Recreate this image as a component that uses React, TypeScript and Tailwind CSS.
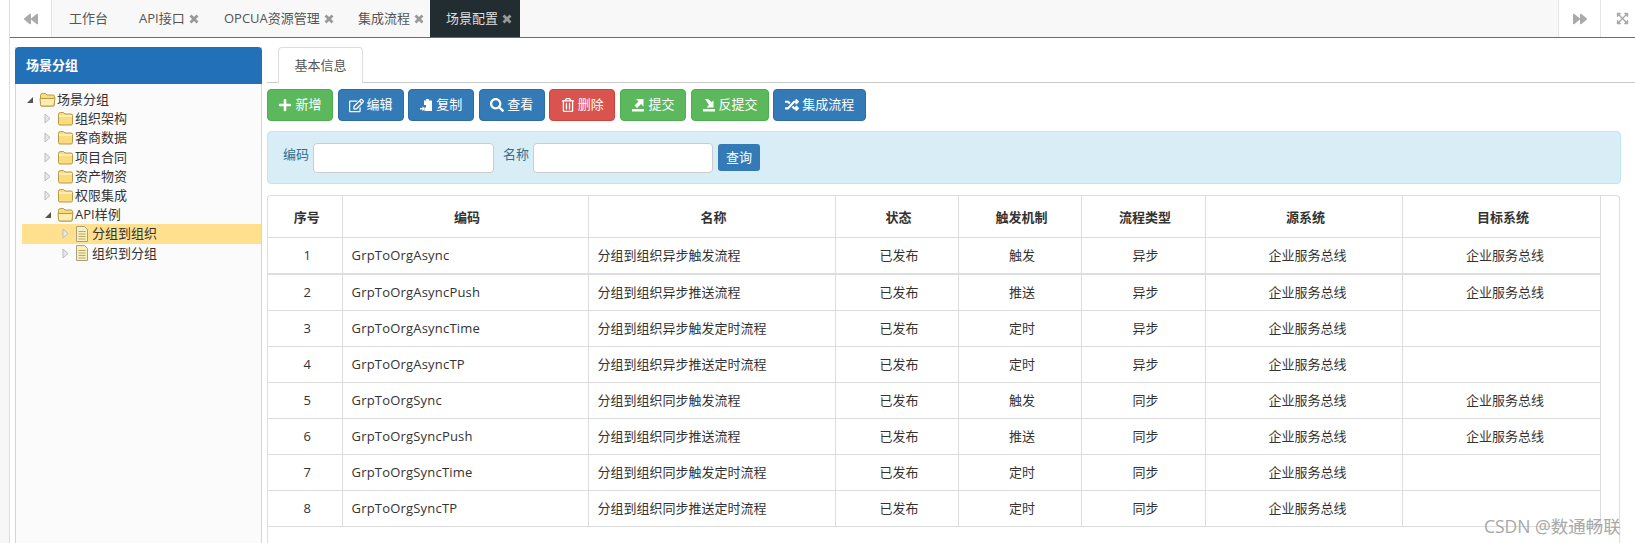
import React from "react";
import { FaBackward, FaExpandArrowsAlt, FaForward, FaPlus, FaRandom, FaRegEdit, FaRegTrashAlt, FaSearch } from "react-icons/fa";

const font = "font-['Open_Sans','Noto_Sans_CJK_SC',sans-serif]";

const Folder = ({ open }: { open?: boolean }) => (
    <svg width="17" height="15" viewBox="0 0 17 15" className="shrink-0">
        <path d="M1.5 3.5 Q1.5 1.5 3.5 1.5 H6.5 L8 3 H14 Q15.5 3 15.5 4.5 V12.5 Q15.5 14 14 14 H3 Q1.5 14 1.5 12.5 Z" fill="#fbdc7c" stroke="#b59a4a" />
        {open ? (
            <path d="M1 6.5 H14 L16 5.5 L15 13 Q15 14 14 14 H3 Q1.5 14 1.5 12.5 Z" fill="#fdeeb0" stroke="#b59a4a" />
        ) : (
            <path d="M2 5 H15" stroke="#fff3c4" strokeWidth="1.5" />
        )}
    </svg>
);

const FileIcon = () => (
    <svg width="14" height="16" viewBox="0 0 14 16" className="shrink-0">
        <path d="M1.5 .5 H9.5 L12.5 3.5 V15.5 H1.5 Z" fill="#f6efc4" stroke="#a8a27a" />
        <path d="M3.5 5.5 H10.5 M3.5 8 H10.5 M3.5 10.5 H10.5 M3.5 13 H10.5" stroke="#b8a860" />
    </svg>
);

const Arrow = ({ open }: { open?: boolean }) =>
    open ? (
        <svg width="8" height="8" viewBox="0 0 8 8" className="shrink-0">
            <path d="M1 7 H7 V1 Z" fill="#555" />
        </svg>
    ) : (
        <svg width="7" height="11" viewBox="0 0 7 11" className="shrink-0">
            <path d="M1 1 L6 5.5 L1 10 Z" fill="#e8e8e8" stroke="#bbb" />
        </svg>
    );

const TreeRow = ({ label, depth, kind, selected }: { label: string; depth: number; kind: string; selected?: boolean }) => {
    const pad = ["pl-[2px]", "pl-[20px]", "pl-[38px]"][depth];
    return (
        <div className={`flex h-[19.2px] items-center ${pad} ${selected ? "bg-[#ffe08f]" : ""}`}>
            <span className="flex w-[11px] justify-center">
                <Arrow open={kind === "open"} />
            </span>
            <span className="ml-[4px]">
                {kind === "file" ? <FileIcon /> : <Folder open={kind === "open"} />}
            </span>
            <span className={`${kind === "file" ? "ml-[3px]" : "ml-[1px]"} text-[13px] leading-none whitespace-nowrap text-[#333]`}>{label}</span>
        </div>
    );
};

const CloseIcon = () => (
    <svg width="10" height="10" viewBox="0 0 10 10" className="ml-[4px] shrink-0">
        <path d="M1.5 1.5 L8.5 8.5 M8.5 1.5 L1.5 8.5" stroke="#999" strokeWidth="2.8" />
    </svg>
);

const CopyIcon = () => (
    <svg width="13" height="14" viewBox="0 0 13 14" fill="white">
        <path d="M4 2.5 H6 V1 H9 V2.5 H12 V13 H4.5 V9.5 H6 V7 H4 Z" />
        <path d="M0 10 H2.5 V8.2 L5 10.7 L2.5 13.2 V11.6 H0 Z" />
    </svg>
);

const SubmitIcon = () => (
    <svg width="14" height="14" viewBox="0 0 14 14" fill="white">
        <path d="M1 11 H13 V13.5 H1 Z" />
        <path d="M5 1 H12.5 V8.5 L10 6 L6 10 L3.5 7.5 L7.5 3.5 Z" />
    </svg>
);

const UnsubmitIcon = () => (
    <svg width="14" height="14" viewBox="0 0 14 14" fill="white">
        <path d="M1 11 H13 V13.5 H1 Z" />
        <path d="M3 1 L6 1 L9.5 4 L11.5 2.5 V9.5 H4.5 L7 7 Z" />
    </svg>
);

const buttons = [
    { label: "新增", w: "w-[66px]", color: "bg-[#5cb85c] border-[#4cae4c]", icon: <FaPlus size={14} /> },
    { label: "编辑", w: "w-[66px]", color: "bg-[#337ab7] border-[#2e6da4]", icon: <FaRegEdit size={15} /> },
    { label: "复制", w: "w-[66px]", color: "bg-[#337ab7] border-[#2e6da4]", icon: <CopyIcon /> },
    { label: "查看", w: "w-[66px]", color: "bg-[#337ab7] border-[#2e6da4]", icon: <FaSearch size={14} /> },
    { label: "删除", w: "w-[66px]", color: "bg-[#d9534f] border-[#d43f3a]", icon: <FaRegTrashAlt size={14} /> },
    { label: "提交", w: "w-[66px]", color: "bg-[#5cb85c] border-[#4cae4c]", icon: <SubmitIcon /> },
    { label: "反提交", w: "w-[78px]", color: "bg-[#5cb85c] border-[#4cae4c]", icon: <UnsubmitIcon /> },
    { label: "集成流程", w: "w-[93px]", color: "bg-[#337ab7] border-[#2e6da4]", icon: <FaRandom size={14} /> },
];

const rows = [
    ["1", "GrpToOrgAsync", "分组到组织异步触发流程", "已发布", "触发", "异步", "企业服务总线", "企业服务总线"],
    ["2", "GrpToOrgAsyncPush", "分组到组织异步推送流程", "已发布", "推送", "异步", "企业服务总线", "企业服务总线"],
    ["3", "GrpToOrgAsyncTime", "分组到组织异步触发定时流程", "已发布", "定时", "异步", "企业服务总线", ""],
    ["4", "GrpToOrgAsyncTP", "分组到组织异步推送定时流程", "已发布", "定时", "异步", "企业服务总线", ""],
    ["5", "GrpToOrgSync", "分组到组织同步触发流程", "已发布", "触发", "同步", "企业服务总线", "企业服务总线"],
    ["6", "GrpToOrgSyncPush", "分组到组织同步推送流程", "已发布", "推送", "同步", "企业服务总线", "企业服务总线"],
    ["7", "GrpToOrgSyncTime", "分组到组织同步触发定时流程", "已发布", "定时", "同步", "企业服务总线", ""],
    ["8", "GrpToOrgSyncTP", "分组到组织同步推送定时流程", "已发布", "定时", "同步", "企业服务总线", ""],
];

const headers = ["序号", "编码", "名称", "状态", "触发机制", "流程类型", "源系统", "目标系统"];

const TopTab = ({ label, w }: { label: string; w: string }) => (
    <div className={`flex h-full items-center ${w} pl-[16px] text-[13px] text-[#555]`}>
        <span className="whitespace-nowrap">{label}</span>
        <CloseIcon />
    </div>
);

export default function App() {
    return (
        <div className={`flex h-[543px] w-[1635px] overflow-hidden bg-white ${font}`}>
            <div className="flex w-[10px] shrink-0 flex-col border-r border-[#ddd]">
                <div className="h-[120px] bg-white" />
                <div className="flex-1 bg-[#f7f7f7]" />
            </div>

            <div className="flex min-w-0 flex-1 flex-col">
                <div className="flex h-[38px] shrink-0 items-stretch border-b border-[#3f7d91] bg-[#f8f8f8]">
                    <div className="flex w-[42px] items-center justify-center border-r border-[#e5e5e5] bg-white text-[#aaa]">
                        <FaBackward size={14} />
                    </div>
                    <div className="flex h-full w-[71px] items-center pl-[17px] text-[13px] text-[#555]">工作台</div>
                    <TopTab label="API接口" w="w-[85px]" />
                    <TopTab label="OPCUA资源管理" w="w-[134px]" />
                    <TopTab label="集成流程" w="w-[88px]" />
                    <div className="flex h-full w-[90px] items-center bg-[#222d32] pl-[16px] text-[13px] text-[#ddd]">
                        <span>场景配置</span>
                        <CloseIcon />
                    </div>
                    <div className="flex-1" />
                    <div className="flex w-[43px] items-center justify-center border-x border-[#e5e5e5] bg-white text-[#aaa]">
                        <FaForward size={14} />
                    </div>
                    <div className="flex w-[34px] items-center justify-center bg-white pl-[8px] text-[#aaa]">
                        <FaExpandArrowsAlt size={13} />
                    </div>
                </div>

                <div className="flex min-h-0 flex-1 pl-[5px]">
                    <div className="mt-[9px] flex w-[247px] shrink-0 flex-col border-x border-[#d5d5d5] bg-[#fbfbfb]">
                        <div className="-mx-px flex h-[37px] shrink-0 items-center rounded-t-[4px] bg-[#2271b8] pl-[11px] text-[13px] font-bold text-white">
                            场景分组
                        </div>
                        <div className="pt-[6px] pl-[6px]">
                            <TreeRow label="场景分组" depth={0} kind="open" />
                            <TreeRow label="组织架构" depth={1} kind="folder" />
                            <TreeRow label="客商数据" depth={1} kind="folder" />
                            <TreeRow label="项目合同" depth={1} kind="folder" />
                            <TreeRow label="资产物资" depth={1} kind="folder" />
                            <TreeRow label="权限集成" depth={1} kind="folder" />
                            <TreeRow label="API样例" depth={1} kind="open" />
                            <TreeRow label="分组到组织" depth={2} kind="file" selected />
                            <TreeRow label="组织到分组" depth={2} kind="file" />
                        </div>
                    </div>

                    <div className="flex min-w-0 flex-1 flex-col pt-[9px] pl-[5px]">
                        <div className="flex h-[36px] shrink-0 items-end border-b border-[#ccc] pl-[11px]">
                            <div className="-mb-px flex h-[36px] w-[85px] items-center justify-center rounded-t-[4px] border border-b-0 border-[#ddd] bg-white text-[13px] text-[#555]">
                                基本信息
                            </div>
                        </div>

                        <div className="mt-[6px] flex gap-[4.6px]">
                            {buttons.map((b) => (
                                <div key={b.label} className={`flex h-[32px] ${b.w} items-center justify-center gap-[3px] rounded-[4px] border text-[13px] text-white ${b.color}`}>
                                    {b.icon}
                                    <span className="whitespace-nowrap">{b.label}</span>
                                </div>
                            ))}
                        </div>

                        <div className="mt-[10px] mr-[14px] flex h-[53px] shrink-0 items-center rounded-[4px] border border-[#bce8f1] bg-[#d9edf7] pl-[15px] text-[13px] text-[#31708f]">
                            <span className="-mt-[5px]">编码</span>
                            <input className="ml-[4px] h-[30px] w-[181px] rounded-[4px] border border-[#ccc] bg-white" />
                            <span className="-mt-[5px] ml-[9px]">名称</span>
                            <input className="ml-[4px] h-[30px] w-[180px] rounded-[4px] border border-[#ccc] bg-white" />
                            <div className="ml-[5px] flex h-[27px] w-[42px] items-center justify-center rounded-[3px] bg-[#337ab7] text-white">查询</div>
                        </div>

                        <div className="mt-[11px] mr-[15px] min-h-0 flex-1 overflow-hidden rounded-t-[4px] border border-b-0 border-[#ddd]">
                            <table className="w-[1332px] table-fixed border-collapse text-[13px] text-[#333]">
                                <colgroup>
                                    <col className="w-[74px]" />
                                    <col className="w-[246px]" />
                                    <col className="w-[247px]" />
                                    <col className="w-[123px]" />
                                    <col className="w-[123px]" />
                                    <col className="w-[124px]" />
                                    <col className="w-[197px]" />
                                    <col className="w-[198px]" />
                                </colgroup>
                                <thead>
                                    <tr className="h-[41px]">
                                        {headers.map((h) => (
                                            <th key={h} className="border border-t-0 border-[#ddd] pt-[3px] pl-[4px] font-bold first:border-l-0">{h}</th>
                                        ))}
                                    </tr>
                                </thead>
                                <tbody>
                                    {rows.map((r, i) => (
                                        <tr key={r[0]} className={i === 0 ? "h-[37px]" : "h-[36px]"}>
                                            {r.map((c, j) => (
                                                <td
                                                    key={j}
                                                    className={`border border-[#ddd] pt-[1px] first:border-l-0 ${i === 0 ? "border-b-2" : ""} ${j === 1 ? "pl-[9px] text-left tracking-[0.2px]" : j === 2 ? "pl-[9px] text-left" : j >= 6 ? "pl-[8px] text-center" : "pl-[5px] text-center"}`}
                                                >
                                                    {c}
                                                </td>
                                            ))}
                                        </tr>
                                    ))}
                                </tbody>
                            </table>
                        </div>
                    </div>
                </div>
            </div>

            <div className="absolute top-[514px] left-[1484px] text-[17.5px] leading-[24px] whitespace-nowrap text-[#a8a8a8]">CSDN @数通畅联</div>
        </div>
    );
}
